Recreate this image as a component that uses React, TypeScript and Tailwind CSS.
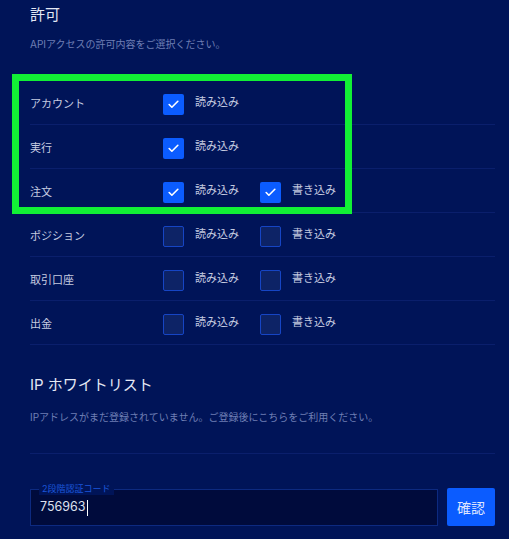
import { Check } from "lucide-react";

const rows: { label: string; read: boolean; write?: boolean }[] = [
  { label: "アカウント", read: true },
  { label: "実行", read: true },
  { label: "注文", read: true, write: true },
  { label: "ポジション", read: false, write: false },
  { label: "取引口座", read: false, write: false },
  { label: "出金", read: false, write: false },
];

function Box({ checked }: { checked: boolean }) {
  return checked ? (
    <span className="flex h-[21px] w-[21px] items-center justify-center rounded-[2px] bg-[#0b5cff]">
      <Check className="h-[13px] w-[13px] text-white" strokeWidth={3} />
    </span>
  ) : (
    <span className="h-[21px] w-[21px] rounded-[2px] border border-[#1645c4] bg-[#0d2366]" />
  );
}

function Perm({ checked, text }: { checked: boolean; text: string }) {
  return (
    <div className="flex w-[97px] items-center gap-[11px]">
      <Box checked={checked} />
      <span className="-mt-[3px] text-[11px] text-[#c5cbe0]">{text}</span>
    </div>
  );
}

export default function App() {
  return (
    <div
      className="relative min-h-[539px] w-full bg-[#001458] pl-[30px] pr-[14px]"
      style={{ fontFamily: '"Inter", "Noto Sans CJK JP", sans-serif' }}
    >
      <h2 className="pt-[5px] text-[15px] leading-[20px] text-[#e4e8f4]">許可</h2>
      <p className="mt-[12px] text-[10px] leading-[14px] text-[#6f7fb4]">
        APIアクセスの許可内容をご選択ください。
      </p>

      <div className="mt-[30px]">
        {rows.map((r) => (
          <div key={r.label} className="flex h-[44px] items-center border-b border-[#0a1f6c] pt-[3px]">
            <span className="w-[133px] text-[11px] text-[#c5cbe0]">{r.label}</span>
            <Perm checked={r.read} text="読み込み" />
            {r.write !== undefined && <Perm checked={r.write} text="書き込み" />}
          </div>
        ))}
      </div>

      <h2 className="mt-[30px] text-[15px] leading-[20px] text-[#e4e8f4]">IP ホワイトリスト</h2>
      <p className="mt-[15px] text-[10px] leading-[14px] text-[#6f7fb4]">
        IPアドレスがまだ登録されていません。ご登録後にこちらをご利用ください。
      </p>
      <div className="mt-[29px] border-b border-[#0a1f6c]" />

      <div className="mt-[34px] flex items-start gap-[9px]">
        <div className="relative mt-px flex h-[37px] flex-1 items-center border border-[#0d2a80] bg-[#000b3c] pl-[9px]">
          <span className="absolute -top-[8px] left-[8px] bg-[#001458] px-[3px] text-[9px] leading-[13px] text-[#1c56d8]">
            2段階認証コード
          </span>
          <span className="text-[12.5px] text-[#dde1ee]">756963</span>
          <span className="ml-px h-[16px] w-px bg-white" />
        </div>
        <button className="h-[38px] w-[48px] rounded-[2px] bg-[#0b5cff] text-[14px] text-[#dfe6ff]">
          確認
        </button>
      </div>

      <div className="pointer-events-none absolute left-[12px] top-[74px] h-[140px] w-[340px] border-[7px] border-[#12f035]" />
    </div>
  );
}
